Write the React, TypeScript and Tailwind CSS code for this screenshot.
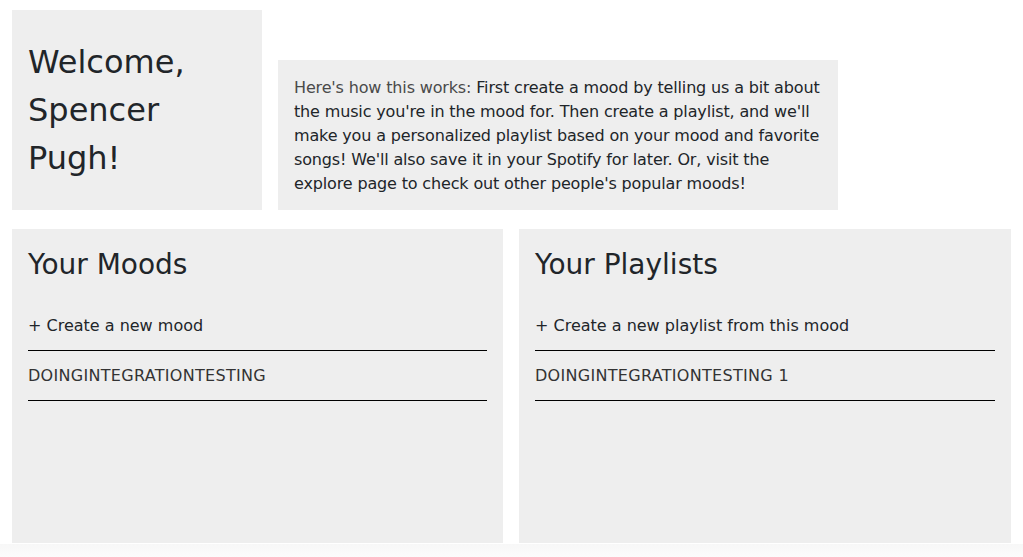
export default function App() {
  const font = { fontFamily: '"DejaVu Sans", "Noto Sans", sans-serif' };
  return (
    <div className="min-h-[557px] bg-white text-[#212529]" style={font}>
      <div className="px-3 pt-[10px]">
        <div className="flex items-end gap-4">
          <div className="w-[250px] bg-[#eeeeee] px-4 py-[28px]">
            <h1 className="text-[32px] leading-[48px]">
              Welcome,
              <br />
              Spencer
              <br />
              Pugh!
            </h1>
          </div>
          <div className="w-[560px] bg-[#eeeeee] px-4 pt-[16px] pb-[14px]">
            <p className="whitespace-nowrap text-[16px] leading-[24px] tracking-[-0.15px]">
              <span className="text-[#4a4a4a]">Here's how this works:</span> First create a mood by telling us a bit
              about
              <br />
              the music you're in the mood for. Then create a playlist, and we'll
              <br />
              make you a personalized playlist based on your mood and favorite
              <br />
              songs! We'll also save it in your Spotify for later. Or, visit the
              <br />
              explore page to check out other people's popular moods!
            </p>
          </div>
        </div>
        <div className="mt-[19px] grid grid-cols-[491px_492px] gap-4">
          <Panel title="Your Moods" action="+ Create a new mood" items={["DOINGINTEGRATIONTESTING"]} />
          <Panel
            title="Your Playlists"
            action="+ Create a new playlist from this mood"
            items={["DOINGINTEGRATIONTESTING 1"]}
          />
        </div>
      </div>
      <div className="mt-px h-[13px] bg-gradient-to-b from-[#f7f7f7] to-[#fcfcfc]" />
    </div>
  );
}

function Panel({ title, action, items }: { title: string; action: string; items: string[] }) {
  return (
    <div className="h-[314px] bg-[#eeeeee] px-4 pt-[18px]">
      <h2 className="text-[28px] leading-[36px]">{title}</h2>
      <ul className="mt-[20px]">
        <li className="border-b border-black pt-[11px] pb-[12px] text-[16px] leading-[24px]">{action}</li>
        {items.map((it) => (
          <li
            key={it}
            className="border-b border-black pt-[13px] pb-[12px] text-[16px] leading-[24px] tracking-[0.3px] text-[#333]"
          >
            {it}
          </li>
        ))}
      </ul>
    </div>
  );
}
